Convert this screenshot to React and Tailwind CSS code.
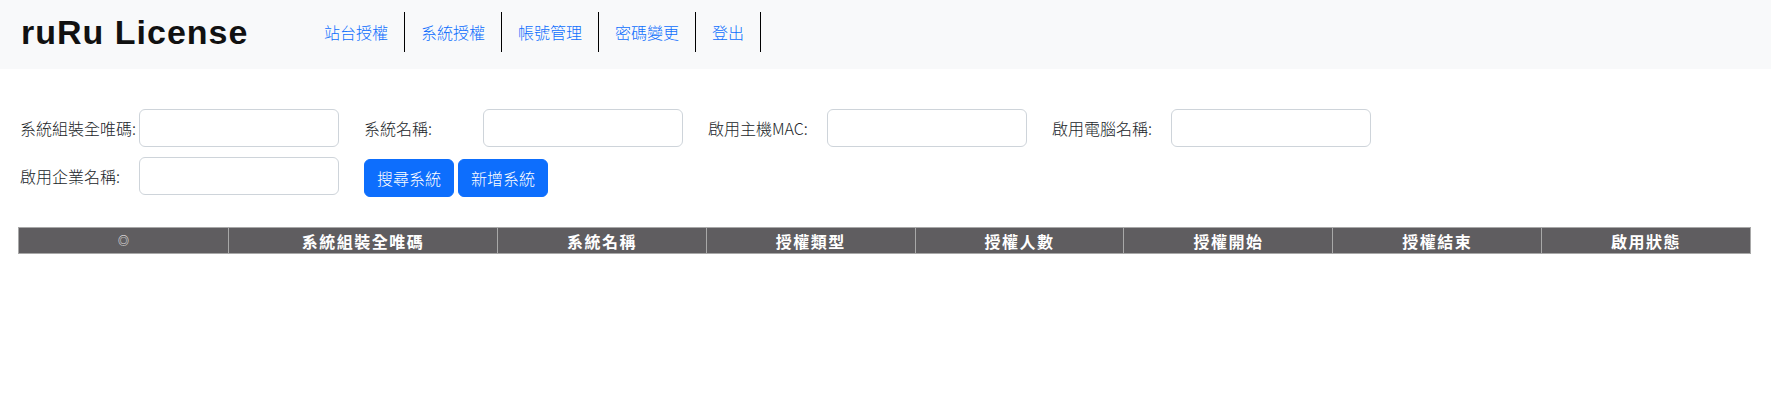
import React from 'react';

const navItems = ['站台授權', '系統授權', '帳號管理', '密碼變更', '登出'];

const filters = [
    ['系統組裝全唯碼:', '系統名稱:', '啟用主機MAC:', '啟用電腦名稱:'],
    ['啟用企業名稱:'],
];

const columns = ['系統組裝全唯碼', '系統名稱', '授權類型', '授權人數', '授權開始', '授權結束', '啟用狀態'];

function Field({ label }) {
    return (
        <div className="flex items-center mr-[25px]">
            <label className="w-[119px] text-[16px] leading-6 font-light text-[#212529]">{label}</label>
            <input className="w-[200px] h-[38px] px-3 border border-[#ced4da] rounded-md bg-white outline-none" />
        </div>
    );
}

export default function App() {
    return (
        <div className="min-h-[400px] bg-white font-['Noto_Sans_CJK_TC','Noto_Sans',sans-serif]">
            {/* top bar */}
            <header className="h-[69px] bg-[#f8f9fa] pt-3 pl-[21px]">
                <div className="flex items-center h-10">
                    <div className="w-[287px] font-['Liberation_Sans',Arial,sans-serif] font-bold text-[34px] leading-8 tracking-[1px] text-[#111]">
                        ruRu License
                    </div>
                    <nav className="flex h-10">
                        {navItems.map(item => (
                            <a key={item} href="#" className="px-4 py-2 leading-6 text-[16px] font-light text-[#0d6efd] border-r border-black">
                                {item}
                            </a>
                        ))}
                    </nav>
                </div>
            </header>

            {/* search form */}
            <div className="pl-5 mt-10">
                <div className="flex">
                    {filters[0].map(f => <Field key={f} label={f} />)}
                </div>
                <div className="flex items-start mt-[10px]">
                    <Field label={filters[1][0]} />
                    <div className="flex gap-1 mt-[2px]">
                        <button className="w-[90px] h-[38px] rounded-md bg-[#0d6efd] border border-[#0d6efd] text-white text-[16px] font-light">搜尋系統</button>
                        <button className="w-[90px] h-[38px] rounded-md bg-[#0d6efd] border border-[#0d6efd] text-white text-[16px] font-light">新增系統</button>
                    </div>
                </div>
            </div>

            {/* result table */}
            <div className="pl-[18px] pr-[20px] mt-[30px]">
                <table className="w-full table-fixed border-collapse">
                    <thead>
                        <tr className="bg-[#5f5d60] text-white">
                            <th className="w-[210px] p-0 h-[26px] border border-[#a8a8a8] text-[11px] font-normal">◎</th>
                            {columns.map((c, i) => (
                                <th
                                    key={c}
                                    className={`${i === 0 ? 'w-[269px]' : ''} p-0 h-[26px] leading-6 border border-[#a8a8a8] text-[16px] font-bold tracking-[1.5px]`}
                                >
                                    {c}
                                </th>
                            ))}
                        </tr>
                    </thead>
                    <tbody></tbody>
                </table>
            </div>
        </div>
    );
}
